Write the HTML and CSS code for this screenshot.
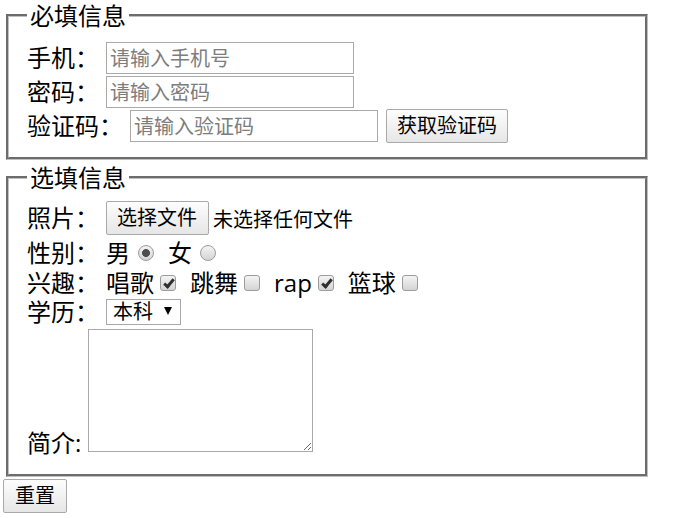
FILE: index.html
```html
<!DOCTYPE html>
<html lang="zh-CN">
<head>
<meta charset="utf-8">
<title>表单</title>
<link rel="stylesheet" href="styles.css">
</head>
<body>
<form class="signup">
  <fieldset class="group group--required">
    <legend class="group__title">必填信息</legend>
    <div class="row">
      <label class="row__label" for="phone">手机：</label>
      <input class="field" id="phone" type="text" placeholder="请输入手机号">
    </div>
    <div class="row">
      <label class="row__label" for="pwd">密码：</label>
      <input class="field" id="pwd" type="password" placeholder="请输入密码">
    </div>
    <div class="row">
      <label class="row__label" for="code">验证码：</label>
      <input class="field" id="code" type="text" placeholder="请输入验证码">
      <button class="btn btn--code" type="button">获取验证码</button>
    </div>
  </fieldset>

  <fieldset class="group group--optional">
    <legend class="group__title">选填信息</legend>
    <div class="row">
      <span class="row__label">照片：</span>
      <label class="file">
        <input class="file__input" type="file">
        <span class="btn file__btn">选择文件</span>
        <span class="file__name">未选择任何文件</span>
      </label>
    </div>
    <div class="row row--radio">
      <span class="row__label">性别：</span>
      <div class="choices">
        <label class="choice choice--radio">男<input class="dot" type="radio" name="sex" checked></label>
        <label class="choice choice--radio">女<input class="dot" type="radio" name="sex"></label>
      </div>
    </div>
    <div class="row row--check">
      <span class="row__label">兴趣：</span>
      <div class="choices">
        <label class="choice">唱歌<input class="tick" type="checkbox" checked></label>
        <label class="choice">跳舞<input class="tick" type="checkbox"></label>
        <label class="choice">rap<input class="tick" type="checkbox" checked></label>
        <label class="choice">篮球<input class="tick" type="checkbox"></label>
      </div>
    </div>
    <div class="row row--select">
      <label class="row__label" for="edu">学历：</label>
      <span class="select">
        <select class="select__control" id="edu">
          <option>本科</option>
          <option>硕士</option>
          <option>博士</option>
        </select>
      </span>
    </div>
    <div class="row row--intro">
      <label class="row__label row__label--bottom" for="intro">简介:</label>
      <textarea class="memo" id="intro"></textarea>
    </div>
  </fieldset>
  <button class="btn btn--reset" type="reset">重置</button>
</form>
</body>
</html>
```
FILE: styles.css
```css
html, body {
  background: #fff;
}

body {
  margin: 0;
  font-family: "Open Sans", "Noto Sans CJK SC", sans-serif;
  font-size: 24px;
  color: #000;
}

.signup {
  padding: 2px 0 0 3px;
}

.group {
  box-sizing: border-box;
  width: 642px;
  min-width: 0;
  margin: 0 0 0 3px;
  border: 3px groove #c0c0c0;
}

.group + .group {
  margin-top: 4px;
}

.group--required {
  padding: 12px 0 14px 18px;
}

.group--optional {
  padding: 10px 0 22px 18px;
}

.group__title {
  font-size: 24px;
  line-height: 27px;
  padding: 0 3px;
}

.row {
  display: flex;
  align-items: center;
  gap: 7px;
  height: 34px;
}

.row--radio {
  height: 35px;
}

.row--check {
  height: 26px;
}

.row--select {
  height: 32px;
}

.row--intro {
  height: 124px;
  align-items: flex-end;
}

.row__label {
  line-height: 24px;
  white-space: nowrap;
}

.row__label--bottom {
  margin-bottom: -3px;
}

.field {
  box-sizing: border-box;
  width: 248px;
  height: 32px;
  margin: 0;
  padding: 0 3px;
  border: 1px solid #a9a9a9;
  border-radius: 0;
  font-family: inherit;
  font-size: 20px;
  color: #000;
  outline: none;
}

.field::placeholder {
  color: #7d7d7d;
}

.btn {
  box-sizing: border-box;
  display: inline-flex;
  align-items: center;
  height: 34px;
  margin: 0;
  padding: 0 10px;
  border: 1px solid #a9a9a9;
  border-radius: 2px;
  background: linear-gradient(#fdfdfd, #e6e6e6);
  font-family: inherit;
  font-size: 20px;
  line-height: 32px;
  color: #000;
}

.btn--code {
  margin-left: 1px;
}

.btn--reset {
  padding: 0 11px;
}

.file {
  display: flex;
  align-items: center;
  gap: 4px;
  font-size: 20px;
}

.file__input {
  display: none;
}

.file__btn {
  padding: 0 11px 0 10px;
}

.choices {
  display: flex;
  align-items: center;
  gap: 14px;
}

.choice {
  display: flex;
  align-items: center;
  gap: 6px;
  line-height: 24px;
}

.choice--radio {
  gap: 8px;
}

.dot,
.tick {
  appearance: none;
  -webkit-appearance: none;
  box-sizing: border-box;
  flex: none;
  width: 16px;
  height: 16px;
  margin: 0;
  border: 1px solid #9c9c9c;
  background: linear-gradient(#f4f4f4, #d4d4d4);
  position: relative;
}

.dot {
  border-radius: 50%;
}

.dot:checked {
  background:
    radial-gradient(circle at center, #4e4e4e 0 3.6px, transparent 4.3px),
    linear-gradient(#f4f4f4, #d4d4d4);
}

.tick {
  border-radius: 3px;
}

.tick:checked::after {
  content: "";
  position: absolute;
  left: 5px;
  top: 1px;
  width: 3px;
  height: 8px;
  border: solid #303030;
  border-width: 0 3px 3px 0;
  transform: rotate(40deg);
}

.select {
  position: relative;
  display: inline-flex;
}

.select::after {
  content: "";
  position: absolute;
  right: 9px;
  top: 8px;
  border-left: 4px solid transparent;
  border-right: 4px solid transparent;
  border-top: 8px solid #000;
  pointer-events: none;
}

.select__control {
  appearance: none;
  -webkit-appearance: none;
  box-sizing: border-box;
  width: 75px;
  height: 26px;
  margin: 0;
  padding: 0 0 0 6px;
  border: 1px solid #a9a9a9;
  border-radius: 0;
  background: #fff;
  font-family: inherit;
  font-size: 20px;
  line-height: 24px;
  color: #000;
}

.memo {
  box-sizing: border-box;
  width: 225px;
  height: 123px;
  margin: 0;
  padding: 2px;
  border: 1px solid #a9a9a9;
  font-family: inherit;
  font-size: 16px;
}
```
